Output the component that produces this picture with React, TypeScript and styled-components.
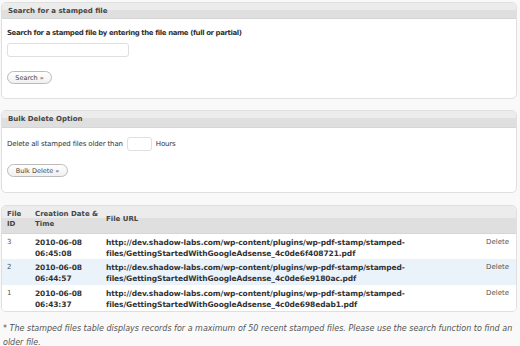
import React from 'react'
import styled, { createGlobalStyle } from 'styled-components'

const GlobalStyle = createGlobalStyle`
  html, body {
    margin: 0;
    padding: 0;
    background: #f9f9f9;
  }
  body {
    font-family: 'DejaVu Sans', Verdana, sans-serif;
    color: #333333;
  }
`

const Page = styled.div`
  width: 520px;
  padding: 2px 3px 0 1px;
  box-sizing: border-box;
  display: flex;
  flex-direction: column;
`

const Box = styled.div<{ $gap?: number }>`
  border: 1px solid #dfdfdf;
  border-radius: 5px;
  background: #ffffff;
  margin-bottom: ${(p) => p.$gap ?? 12}px;
  overflow: hidden;
`

const BoxHeader = styled.h3<{ $h: number }>`
  margin: 0;
  height: ${(p) => p.$h}px;
  padding: 0 6px;
  display: flex;
  align-items: center;
  font-size: 7px;
  font-weight: bold;
  color: #464646;
  background: linear-gradient(#ececec 0%, #ececec 45%, #dfdfdf 46%, #dfdfdf 100%);
  border-bottom: 1px solid #d6d6d6;
`

const BoxBody = styled.div<{ $pad: string }>`
  padding: ${(p) => p.$pad};
  display: flex;
  flex-direction: column;
  align-items: flex-start;
  font-size: 7px;
`

const Label = styled.div`
  font-weight: bold;
  color: #333;
  height: 10px;
  line-height: 10px;
  letter-spacing: -0.42px;
  margin-bottom: 5px;
`

const TextInput = styled.input<{ $w: number; $h: number }>`
  width: ${(p) => p.$w}px;
  height: ${(p) => p.$h}px;
  box-sizing: border-box;
  border: 1px solid #dfdfdf;
  border-radius: 3px;
  background: #fff;
  padding: 0 3px;
  margin: 0;
  outline: none;
`

const PillButton = styled.button<{ $w: number; $top: number }>`
  width: ${(p) => p.$w}px;
  height: 13px;
  margin-top: ${(p) => p.$top}px;
  box-sizing: border-box;
  border: 1px solid #bbbbbb;
  border-radius: 7px;
  background: linear-gradient(#ffffff, #f0f0f0);
  font-family: 'DejaVu Sans', Verdana, sans-serif;
  font-size: 6.5px;
  color: #464646;
  padding: 0;
  display: flex;
  align-items: center;
  justify-content: center;
`

const InlineRow = styled.div`
  display: flex;
  align-items: center;
  gap: 4px;
  color: #333;
  letter-spacing: -0.15px;
`

const Table = styled.table`
  width: 100%;
  border-collapse: collapse;
  table-layout: fixed;
  font-size: 7px;
`

const HeadRow = styled.tr`
  height: 27px;
`

const HeadCell = styled.th<{ $w?: number }>`
  ${(p) => (p.$w ? `width: ${p.$w}px;` : '')}
  box-sizing: border-box;
  text-align: left;
  vertical-align: middle;
  font-weight: bold;
  color: #464646;
  padding: 0 0 0 5px;
  line-height: 10px;
  background: linear-gradient(#ececec 0%, #ececec 45%, #dfdfdf 46%, #dfdfdf 100%);
  border-bottom: 1px solid #d6d6d6;
`

const Row = styled.tr<{ $alt?: boolean }>`
  height: 26px;
  background: ${(p) => (p.$alt ? '#eaf2fa' : '#ffffff')};
  & + & td {
    border-top: 1px solid #dfdfdf;
  }
`

const Cell = styled.td<{ $bold?: boolean; $right?: boolean }>`
  vertical-align: top;
  padding: 3px ${(p) => (p.$right ? '7px' : '0')} 0 5px;
  line-height: 11px;
  font-size: ${(p) => (p.$bold ? '7.5px' : '7px')};
  letter-spacing: ${(p) => (p.$bold ? '-0.1px' : '0')};
  font-weight: ${(p) => (p.$bold ? 'bold' : 'normal')};
  color: ${(p) => (p.$bold ? '#333' : '#555')};
  text-align: ${(p) => (p.$right ? 'right' : 'left')};
  white-space: nowrap;
`

const Note = styled.p`
  margin: 10px 0 0 2px;
  font-size: 8px;
  font-style: italic;
  line-height: 14px;
  color: #555;
`

const files = [
  { id: 3, date: '2010-06-08', time: '06:45:08', hash: '4c0de6f408721' },
  { id: 2, date: '2010-06-08', time: '06:44:57', hash: '4c0de6e9180ac' },
  { id: 1, date: '2010-06-08', time: '06:43:37', hash: '4c0de698edab1' },
]

const App: React.FC = () => {
  return (
    <Page>
      <GlobalStyle />
      <Box $gap={11}>
        <BoxHeader $h={15}>Search for a stamped file</BoxHeader>
        <BoxBody $pad="9px 5px 14px">
          <Label>Search for a stamped file by entering the file name (full or partial)</Label>
          <TextInput $w={122} $h={14} />
          <PillButton $w={45} $top={14}>Search »</PillButton>
        </BoxBody>
      </Box>

      <Box $gap={12}>
        <BoxHeader $h={16}>Bulk Delete Option</BoxHeader>
        <BoxBody $pad="9px 5px 15px">
          <InlineRow>
            Delete all stamped files older than <TextInput $w={25} $h={14} /> Hours
          </InlineRow>
          <PillButton $w={61} $top={13}>Bulk Delete »</PillButton>
        </BoxBody>
      </Box>

      <Box $gap={0}>
        <Table>
          <thead>
            <HeadRow>
              <HeadCell $w={28}>File ID</HeadCell>
              <HeadCell $w={71}>Creation Date &amp; Time</HeadCell>
              <HeadCell>File URL</HeadCell>
              <HeadCell $w={40} />
            </HeadRow>
          </thead>
          <tbody>
            {files.map((f, i) => (
              <Row key={f.id} $alt={i === 1}>
                <Cell>{f.id}</Cell>
                <Cell $bold>
                  {f.date}
                  <br />
                  {f.time}
                </Cell>
                <Cell $bold>
                  http://dev.shadow-labs.com/wp-content/plugins/wp-pdf-stamp/stamped-
                  <br />
                  files/GettingStartedWithGoogleAdsense_{f.hash}.pdf
                </Cell>
                <Cell $right>Delete</Cell>
              </Row>
            ))}
          </tbody>
        </Table>
      </Box>

      <Note>
        * The stamped files table displays records for a maximum of 50 recent stamped files. Please use the search
        function to find an older file.
      </Note>
    </Page>
  )
}

export default App
